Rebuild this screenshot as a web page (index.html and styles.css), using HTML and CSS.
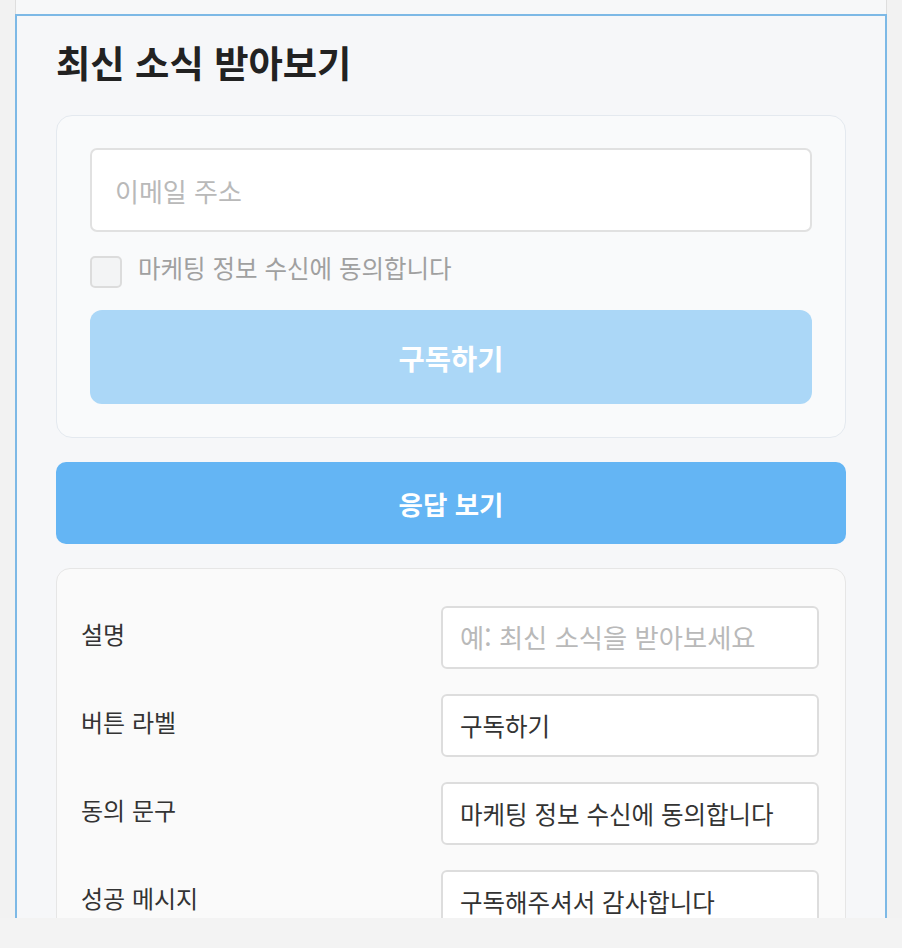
FILE: index.html
```html
<!DOCTYPE html>
<html lang="ko">
<head>
    <meta charset="UTF-8">
    <meta name="viewport" content="width=device-width, initial-scale=1.0">
    <title>최신 소식 받아보기</title>
    <link rel="stylesheet" href="styles.css">
</head>
<body>
    <div class="page">
        <div class="prev-card"></div>

        <div class="block selected">
            <h2 class="block-title">최신 소식 받아보기</h2>

            <!-- 미리보기 -->
            <div class="preview">
                <input class="email-input" type="email" placeholder="이메일 주소">
                <label class="agree">
                    <span class="check"></span>
                    <span>마케팅 정보 수신에 동의합니다</span>
                </label>
                <button class="subscribe-button" disabled>구독하기</button>
            </div>

            <button class="response-button">응답 보기</button>

            <!-- 설정 -->
            <div class="settings">
                <div class="setting-row">
                    <span class="setting-label">설명</span>
                    <input class="setting-input" type="text" placeholder="예: 최신 소식을 받아보세요">
                </div>
                <div class="setting-row">
                    <span class="setting-label">버튼 라벨</span>
                    <input class="setting-input" type="text" value="구독하기">
                </div>
                <div class="setting-row">
                    <span class="setting-label">동의 문구</span>
                    <input class="setting-input" type="text" value="마케팅 정보 수신에 동의합니다">
                </div>
                <div class="setting-row">
                    <span class="setting-label">성공 메시지</span>
                    <input class="setting-input" type="text" value="구독해주셔서 감사합니다">
                </div>
            </div>
        </div>
    </div>

    <div class="bottom-bar"></div>
</body>
</html>
```

FILE: styles.css
```css
* {
    margin: 0;
    padding: 0;
    box-sizing: border-box;
}

body {
    background: #f2f2f2;
    color: #222;
    font-family: "Noto Sans CJK KR", "Noto Sans", sans-serif;
    height: 948px;
    overflow: hidden;
}

.page {
    padding: 0 15px;
}

.prev-card {
    height: 14px;
    background: #f7f8f9;
    border-left: 1px solid #dedede;
    border-right: 1px solid #dedede;
}

.block {
    background: #f6f7f9;
    border: 2px solid #7db9e6;
    border-bottom: none;
    padding: 22px 39px 40px 39px;
}

.block-title {
    font-size: 37.3px;
    font-weight: 700;
    color: #222;
    line-height: 48px;
    margin-bottom: 29px;
}

/* 미리보기 */
.preview {
    background: #f9fafb;
    border: 1px solid #e4e9ef;
    border-radius: 16px;
    padding: 32px 33px 33px 33px;
}

.email-input {
    display: block;
    width: 100%;
    height: 84px;
    border: 2px solid #e1e1e1;
    border-radius: 7px;
    background: white;
    padding: 0 23px;
    font-family: inherit;
    font-size: 26px;
    color: #333;
    outline: none;
}

.email-input::placeholder {
    color: #b9b9b9;
}

.agree {
    display: flex;
    align-items: flex-start;
    gap: 16px;
    margin-top: 20px;
    font-size: 24.5px;
    line-height: 32px;
    color: #a0a0a0;
}

.check {
    width: 32px;
    height: 32px;
    margin-top: 4px;
    border: 2px solid #dcdcdc;
    border-radius: 5px;
    background: #f3f4f5;
    flex-shrink: 0;
}

.subscribe-button {
    display: block;
    width: 100%;
    height: 94px;
    margin-top: 22px;
    border: none;
    border-radius: 12px;
    background: #abd7f7;
    color: white;
    font-family: inherit;
    font-size: 28.5px;
    font-weight: 700;
}

.response-button {
    display: block;
    width: 100%;
    height: 82px;
    margin-top: 24px;
    border: none;
    border-radius: 10px;
    background: #64b5f4;
    color: white;
    font-family: inherit;
    font-size: 26.5px;
    font-weight: 700;
    cursor: pointer;
}

/* 설정 */
.settings {
    margin-top: 24px;
    background: #fafafa;
    border: 1px solid #e6e6e6;
    border-radius: 14px;
    padding: 37px 26px 30px 24px;
    display: flex;
    flex-direction: column;
    gap: 25px;
}

.setting-row {
    display: grid;
    grid-template-columns: 1fr 378px;
    align-items: start;
}

.setting-label {
    font-size: 24px;
    line-height: 56px;
    color: #333;
}

.setting-input {
    height: 63px;
    border: 2px solid #dddddd;
    border-radius: 6px;
    background: white;
    padding: 0 17px;
    font-family: inherit;
    font-size: 24.5px;
    color: #333;
    outline: none;
}

.setting-input::placeholder {
    color: #b9b9b9;
    font-size: 26.3px;
}

.bottom-bar {
    position: fixed;
    left: 0;
    right: 0;
    bottom: 0;
    height: 30px;
    background: #f3f3f3;
}
```
